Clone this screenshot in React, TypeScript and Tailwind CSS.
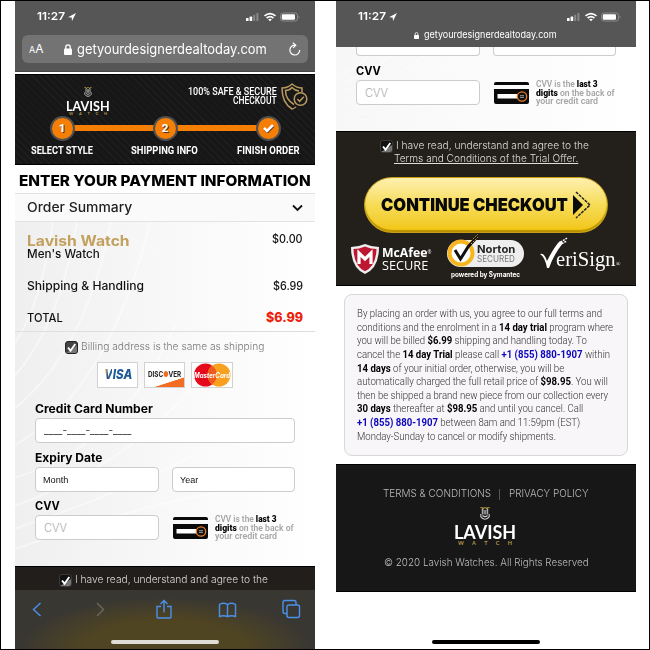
import { useLayoutEffect, useRef, type ReactNode } from "react";

const INTER = "font-['Inter','Liberation_Sans',sans-serif]";
const ROBOTO = "font-['Roboto','Liberation_Sans',sans-serif]";

/* Stretches one line of text to the width of its box. */
function Fit({ className = "", children }: { className?: string; children: ReactNode }) {
  const box = useRef<HTMLDivElement>(null);
  const text = useRef<HTMLSpanElement>(null);
  useLayoutEffect(() => {
    if (box.current && text.current) {
      const natural = text.current.offsetWidth;
      text.current.style.transform = `scaleX(${box.current.clientWidth / natural})`;
    }
  }, []);
  return (
    <div ref={box} className={`shrink-0 whitespace-nowrap ${className}`}>
      <span ref={text} className="inline-block origin-left">
        {children}
      </span>
    </div>
  );
}

function Status() {
  return (
    <div className="flex h-[30px] items-center pl-[22px] pr-[15px] pt-[1px] text-white">
      <Fit className={`w-[28px] text-[11px] font-semibold leading-none ${INTER}`}>11:27</Fit>
      <svg className="ml-[3px] h-[8px] w-[8px]" viewBox="0 0 8 8" fill="white">
        <path d="M8 0 0 4.2l3.7.2L4 8z" />
      </svg>
      <svg className="ml-auto h-[10px] w-[55px]" viewBox="0 0 55 10">
        <rect x="1" y="6" width="2.6" height="3" rx=".6" fill="white" />
        <rect x="4.6" y="4.6" width="2.6" height="4.4" rx=".6" fill="white" />
        <rect x="8.2" y="2.8" width="2" height="6.2" rx=".6" fill="#888" />
        <rect x="11.4" y="1" width="2" height="8" rx=".6" fill="#888" />
        <g fill="none" stroke="white" strokeWidth="1.7">
          <path d="M19.5 3.9q5.5-4.6 11 0M21.6 6q3.4-2.8 6.8 0" />
        </g>
        <path d="M23.2 7.4q1.8-1.2 3.6 0L25 9.3z" fill="white" />
        <rect x="35.5" y="1" width="17" height="8" rx="2.4" fill="none" stroke="#999" strokeWidth=".8" />
        <rect x="36.8" y="2.2" width="13.2" height="5.6" rx="1.2" fill="white" />
        <path d="M53.7 3.6q1.5 1.4 0 2.8z" fill="#999" />
      </svg>
    </div>
  );
}

function Lock({ className }: { className: string }) {
  return (
    <svg className={className} viewBox="0 0 8 11" fill="white">
      <rect y="4.6" width="8" height="6.4" rx="1" />
      <path d="M1.8 5V3a2.2 2.2 0 0 1 4.4 0v2" fill="none" stroke="white" strokeWidth="1.3" />
    </svg>
  );
}

function Crown({ className }: { className: string }) {
  return (
    <svg className={className} viewBox="0 0 10 13" fill="none">
      <path d="M.3.8h2.2L3 2.200 4 .8h2l1 1.400.5-1.400h2.200" stroke="#b5994c" strokeWidth="1.1" />
      <path d="M2.300 2v5.500M4.100 3v4.500M5.900 3v4.500M7.700 2v5.500" stroke="#ccc" strokeWidth="1" />
      <path d="M.8 7v2.600Q2.400 12.200 5 12.200t4.200-2.600V7M2.500 8.500q2.500 2.400 5 0" stroke="#ccc" strokeWidth="1.1" />
    </svg>
  );
}

function Logo({ big = false }: { big?: boolean }) {
  return (
    <div className="flex flex-col items-center">
      <Crown className={big ? "h-[13px] w-[10px]" : "h-[10px] w-[8px]"} />
      <Fit
        className={`font-['Lato',sans-serif] font-bold text-white ${
          big ? "mt-[4px] h-[16px] w-[62px] text-[18.5px] leading-[16px]" : "mt-[3px] h-[12px] w-[44px] text-[14px] leading-[12px]"
        }`}
      >
        LAVISH
      </Fit>
      <div
        className={`flex justify-between font-['Lato',sans-serif] font-bold text-[#b5994c] ${
          big ? "w-[54px] text-[5.5px] leading-[6px]" : "w-[38px] text-[4px] leading-[4px]"
        }`}
      >
        <span>W</span>
        <span>A</span>
        <span>T</span>
        <span>C</span>
        <span>H</span>
      </div>
    </div>
  );
}

function Swirls() {
  return (
    <svg className="absolute inset-0 -z-10 h-full w-full" viewBox="0 0 300 370" preserveAspectRatio="none" fill="none">
      <g stroke="white" strokeWidth="2" opacity=".45">
        <path d="M0 130Q26 90 38 0M0 165Q45 110 62 0M0 200Q70 140 96 0M0 240Q95 180 135 0" />
        <path d="M0 275Q110 240 160 110M0 305Q120 260 190 160M0 330Q110 290 180 250M0 352Q130 300 240 285" />
      </g>
    </svg>
  );
}

function Check({ dark = false }: { dark?: boolean }) {
  return (
    <svg className="h-[13px] w-[13px] shrink-0" viewBox="0 0 13 13">
      <rect x=".5" y=".5" width="12" height="12" rx="2.5" fill={dark ? "#111" : "#444"} stroke={dark ? "#3c3a38" : "#222"} />
      <path d="M1 12 12 5v5q0 2-2 2z" fill="#777" />
      <path d="m3 6.5 2.5 3.2L10.3 3" fill="none" stroke="white" strokeWidth="1.9" />
    </svg>
  );
}

function CvvRow() {
  return (
    <div className="flex h-[25px]">
      <div className="flex h-[25px] w-[124px] items-center rounded-[4px] border border-[#ccc] bg-white pl-[8px] pt-[2px]">
        <Fit className={`w-[23px] text-[11px] font-light leading-none text-[#aaa] ${INTER}`}>CVV</Fit>
      </div>
      <svg className="ml-[14px] mt-[1px] h-[24px] w-[35px]" viewBox="0 0 35 24">
        <path d="M0 4V3q0-2 2-2h31q2 0 2 2v1zM0 8h35v13q0 2-2 2H2q-2 0-2-2z" fill="#0a0a0a" />
        <rect x="3.5" y="13" width="20" height="4.5" fill="white" />
        <circle cx="28" cy="15.5" r="4.7" fill="#111" stroke="#ef7b22" strokeWidth="1.3" />
        <path d="M26 14.7h4M26 16.4h4" stroke="#bbb" strokeWidth=".8" />
      </svg>
      <div className={`ml-[7px] text-[9px] font-semibold leading-[8.7px] text-[#a5a5a5] ${ROBOTO}`}>
        <Fit className="w-[62px]">
          CVV is the <b className="font-black text-black">last 3</b>
        </Fit>
        <Fit className="w-[79px]">
          <b className="font-black text-black">digits</b> on the back of
        </Fit>
        <Fit className="w-[62px]">your credit card</Fit>
      </div>
    </div>
  );
}

function Label({ className, children }: { className: string; children: ReactNode }) {
  return <Fit className={`text-[11.5px] font-bold text-black ${className}`}>{children}</Fit>;
}

function Header() {
  return (
    <div className={`mt-[2px] h-[91px] border-y border-black bg-[#171717] bg-[repeating-linear-gradient(45deg,transparent_0_4px,#1e1e1e_4px_5px)] text-white ${ROBOTO}`}>
      <div className="flex h-[41px] items-start pl-[51px] pr-[7px] pt-[12px]">
        <Logo />
        <div className="ml-auto flex flex-col items-end text-[10px] font-medium leading-[9px]">
          <Fit className="w-[89px]">100% SAFE &amp; SECURE</Fit>
          <Fit className="w-[44px]">CHECKOUT</Fit>
        </div>
        <svg className="-mt-[4px] ml-[4px] h-[28px] w-[27px]" viewBox="0 0 27 28" fill="none" stroke="#b99a60" strokeWidth="1.5">
          <path d="M15 24q-3 2-4 2Q1 20 1 5 7 5 11 1q5 4 10 4v4" />
          <path d="M13 21.500q-8.500-5-8.500-14 4 0 6.500-3 3 3 7 3.500" />
          <circle cx="19.5" cy="16" r="6.3" />
          <path d="m16.4 16 2.2 2.3 4.2-4.6" />
        </svg>
      </div>
      <div className="relative flex h-[25px] items-center justify-between pl-[34.5px] pr-[34.5px]">
        <div className="absolute left-[47px] right-[47px] top-[9px] h-[6px] bg-[#f57e05]" />
        {["1", "2", "✓"].map((step) => (
          <div key={step} className="relative flex h-[25px] w-[25px] items-center justify-center rounded-full border-[2.5px] border-[#505050] bg-[#f57e05] text-[11.5px] font-extrabold text-white [text-shadow:1px_1px_0px_#532]">
            {step === "✓" ? (
              <svg className="h-[9px] w-[11px]" viewBox="0 0 11 9" fill="none" strokeWidth="2.6">
                <path d="m1.5 5 3 3 6-6" stroke="#532" />
                <path d="m1 4 3 3 6-6" stroke="white" />
              </svg>
            ) : (
              step
            )}
          </div>
        ))}
      </div>
      <div className="flex h-[19px] items-center pl-[16px] text-[11px] font-bold leading-none">
        <Fit className="w-[62px]">SELECT STYLE</Fit>
        <Fit className="ml-[38px] w-[67px]">SHIPPING INFO</Fit>
        <Fit className="ml-[39px] w-[63px]">FINISH ORDER</Fit>
      </div>
    </div>
  );
}

function Cards() {
  return (
    <div className={`flex justify-center gap-[6px] ${INTER}`}>
      <div className="flex h-[26px] w-[41px] items-center justify-center border border-[#d2d2d2] bg-white">
        <Fit className="w-[28px] text-[13.5px] font-extrabold italic leading-none text-[#1c5a98]">
          <span className="bg-gradient-to-r from-[#efa92c] from-25% to-[#1c5a98] to-35% bg-clip-text text-transparent">V</span>ISA
        </Fit>
      </div>
      <div className="flex h-[26px] w-[41px] flex-col items-center border border-[#d2d2d2] bg-white bg-[linear-gradient(162deg,transparent_73%,#f26c21_75%)] pt-[7px]">
        <Fit className="w-[33px] text-[8px] font-bold leading-none text-[#222]">
          DISC<span className="text-[#f26c21]">●</span>VER
        </Fit>
      </div>
      <div className="relative flex h-[26px] w-[42px] items-center justify-center border border-[#d2d2d2] bg-white">
        <svg className="absolute inset-0 h-[24px] w-[40px]" viewBox="0 0 40 24">
          <circle cx="13.5" cy="12" r="11.5" fill="#e5091c" />
          <circle cx="27" cy="12" r="11.5" fill="#f9a020" />
          <path d="M20.2 2.7a11.5 11.5 0 0 1 0 18.6 11.5 11.5 0 0 1 0-18.6" fill="#ef5a1d" />
        </svg>
        <Fit className="relative w-[36px] text-[7px] font-bold italic leading-none text-white">MasterCard</Fit>
      </div>
    </div>
  );
}

function LeftPhone() {
  return (
    <div className={`flex h-[648px] w-[300px] flex-col ${INTER}`}>
      <div className="h-[71px] border-b border-[#444] bg-[#565656]">
        <Status />
        <div className="mx-[7px] mt-[4px] flex h-[28px] items-center rounded-[6px] bg-[#737373] text-white">
          <div className="ml-[7px] flex items-baseline leading-none">
            <span className="text-[9px]">A</span>
            <span className="text-[12px]">A</span>
          </div>
          <Lock className="ml-[20px] h-[11px] w-[8px]" />
          <Fit className="ml-[5px] w-[190px] text-[14px] leading-none">getyourdesignerdealtoday.com</Fit>
          <svg className="ml-auto mr-[7px] h-[14px] w-[13px]" viewBox="0 0 13 14" fill="none" stroke="white" strokeWidth="1.2">
            <path d="M7 3.2a4.9 4.9 0 1 0 4.7 4.9M4.8.6l3 2.7-2.6 2.6" />
          </svg>
        </div>
      </div>
      <Header />
      <div className="flex h-[28px] items-center bg-white pl-[4px] pt-[3px]">
        <Fit className="w-[292px] text-[15px] font-extrabold leading-none text-black">ENTER YOUR PAYMENT INFORMATION</Fit>
      </div>
      <div className="flex h-[29px] items-center justify-between border-y border-[#e3e3e3] bg-[#fafafa] pl-[12px] pr-[12px]">
        <Fit className="w-[105px] text-[13px] font-medium leading-none text-[#222]">Order Summary</Fit>
        <svg className="h-[8px] w-[11px]" viewBox="0 0 11 8" fill="none" stroke="#111" strokeWidth="1.8">
          <path d="m1 1.5 4.5 4.5L10 1.5" />
        </svg>
      </div>
      <div className="relative isolate h-[344px] bg-gradient-to-r from-[#efefef] via-[#f8f8f8] to-white">
        <Swirls />
        <div className="flex h-[110px] flex-col border-b border-[#dedede] pl-[12px] pr-[12px] pt-[9px] text-[11.5px] font-[450] leading-none text-[#111]">
          <div className="flex h-[17px] justify-between">
            <Fit className="w-[103px] text-[14px] font-bold leading-[20px] text-[#c2a05d]">Lavish Watch</Fit>
            <Fit className="w-[31px] leading-[16px]">$0.00</Fit>
          </div>
          <Fit className="h-[12px] w-[73px] leading-[12px]">Men's Watch</Fit>
          <div className="mt-[18px] flex h-[16px] justify-between leading-[16px]">
            <Fit className="w-[117px]">Shipping &amp; Handling</Fit>
            <Fit className="w-[30px]">$6.99</Fit>
          </div>
          <div className="mt-[16px] flex h-[16px] justify-between leading-[16px]">
            <Fit className="w-[36px]">TOTAL</Fit>
            <Fit className="w-[37px] text-[12.5px] font-extrabold text-[#ed220b]">$6.99</Fit>
          </div>
        </div>
        <div className="flex h-[30px] items-center pl-[50px]">
          <Check />
          <Fit className="ml-[3px] w-[183px] text-[10.5px] font-light leading-none text-[#777]">Billing address is the same as shipping</Fit>
        </div>
        <Cards />
        <div className="pl-[20px] pr-[20px]">
          <Label className="mt-[12px] h-[18px] w-[118px] leading-[18px]">Credit Card Number</Label>
          <div className="flex h-[25px] items-center rounded-[4px] border border-[#ccc] bg-white pl-[8px]">
            <Fit className="w-[87px] text-[11px] leading-none text-[#444]">____-____-____-____</Fit>
          </div>
          <Label className="mt-[6px] h-[18px] w-[67px] leading-[18px]">Expiry Date</Label>
          <div className="flex gap-[13px] text-[9.5px] text-[#111]">
            <div className="flex h-[25px] w-[124px] items-center rounded-[4px] border border-[#ccc] bg-white pl-[7px]">
              <Fit className="w-[25px] font-['Liberation_Sans',sans-serif] leading-none">Month</Fit>
            </div>
            <div className="flex h-[25px] w-[123px] items-center rounded-[4px] border border-[#ccc] bg-white pl-[7px]">
              <Fit className="w-[18px] font-['Liberation_Sans',sans-serif] leading-none">Year</Fit>
            </div>
          </div>
          <Label className="mt-[5px] h-[18px] w-[25px] leading-[18px]">CVV</Label>
          <CvvRow />
        </div>
      </div>
      <div className="flex h-[24px] items-center border-t border-black bg-[#211e1b] pl-[44px] pt-[4px]">
        <Check dark />
        <Fit className="ml-[3px] w-[193px] text-[10.5px] font-light leading-none text-[#ddd]">I have read, understand and agree to the</Fit>
      </div>
      <div className="flex h-[59px] flex-col items-center bg-[#393732] bg-[radial-gradient(ellipse_145px_52px_at_50%_100%,#504522_55%,#393732)]">
        <svg className="h-[50px] w-[300px]" viewBox="0 0 300 50" fill="none" stroke="#4b91ea" strokeWidth="1.4">
          <path d="m25.5 13-7 6.5 7 6.5" />
          <path d="m82 13 6.5 6.5L82 26" stroke="#6a6861" />
          <path d="M146 16.500h-4v10.500q0 1 1 1h12q1 0 1-1V16.500h-4M149 22.500V11M145.500 14l3.500-3.500 3.500 3.500" />
          <path d="M212.500 14.500v12q-4-1.500-8 0v-12q4-2.500 8 0 4-2.500 8 0v12q-4-1.500-8 0" />
          <rect x="272" y="15" width="12.500" height="12.500" rx="2" />
          <path d="M272 23.500h-2q-2 0-2-2v-9q0-2 2-2h9q2 0 2 2V15" />
        </svg>
        <div className="h-[4px] w-[108px] rounded-full bg-[#e0ddd6]" />
      </div>
    </div>
  );
}

function Badges() {
  return (
    <div className="flex h-[48px] items-start pl-[15px] text-white">
      <svg className="mt-[8px] h-[30px] w-[28px]" viewBox="0 0 28 30">
        <path d="M14 0q7 3 14 3 0 21-14 27Q0 24 0 3q7 0 14-3" fill="#eee" />
        <path d="M14 2.500q6 2.500 11.500 2.500-.5 17-11.500 22.300Q3 22 2.500 5 8 5 14 2.500" fill="#bd1732" />
        <path d="M8 20V9l6 6 6-6v11" fill="none" stroke="white" strokeWidth="3.200" />
      </svg>
      <div className="ml-[3px] mt-[10px] font-['Open_Sans',sans-serif] text-[13px] leading-[13px]">
        <Fit className="h-[13px] w-[49px] font-bold">
          McAfee<span className="align-top text-[5px] font-normal">®</span>
        </Fit>
        <Fit className="h-[13px] w-[46px] font-medium">SECURE</Fit>
      </div>
      <div className="ml-[16px] w-[77px]">
        <div className="relative mt-[4px] flex h-[27px] rounded-full bg-[#eee] pl-[30px] pt-[4px]">
          <div className={`leading-[10px] ${INTER}`}>
            <Fit className="h-[10px] w-[38px] text-[11px] font-bold text-[#222]">Norton</Fit>
            <Fit className="h-[10px] w-[38px] text-[8.5px] text-[#777]">SECURED</Fit>
          </div>
          <svg className="absolute -top-[6px] left-0 h-[34px] w-[34px]" viewBox="0 0 34 34" fill="none">
            <circle cx="14" cy="19" r="11.500" stroke="#f7b51e" strokeWidth="4" fill="white" />
            <path d="m8 16 5.500 9L21 13l9-10" stroke="#111" strokeWidth="3" />
            <path d="m22 9 9-9M24 10l7-7" stroke="#f7b51e" strokeDasharray="1.500 1.500" />
          </svg>
        </div>
        <Fit className={`ml-[4px] mt-[3px] w-[69px] text-[7px] font-bold leading-[9px] ${INTER}`}>powered by Symantec</Fit>
      </div>
      <svg className="ml-[16px] mt-[1px] h-[32px] w-[28px] shrink-0" viewBox="0 0 28 32">
        <path d="M0 17q4-2 7 7Q14 10 20 4l3 2Q14 17 9 31H7Q5 20 0 17" fill="white" />
        <path d="m18 7 9-6M19 8l8-4" stroke="white" strokeWidth="1.500" strokeDasharray="2 1" />
      </svg>
      <Fit className="-ml-[12px] mt-[11px] w-[64px] font-['Liberation_Serif',serif] text-[20px] leading-[24px]">
        eriSign<span className="text-[6px]">®</span>
      </Fit>
    </div>
  );
}

function Terms() {
  return (
    <div className={`mx-[8px] mt-[8px] h-[162px] rounded-[8px] border border-[#d8d8da] bg-[#f8f6f8] pl-[12px] pt-[12px] text-[11px] font-[350] leading-[13.63px] text-[#333] [&_b]:font-bold [&_b]:text-black [&_i]:font-bold [&_i]:not-italic [&_i]:text-[#0b05bd] ${ROBOTO}`}>
      <Fit className="w-[245px]">By placing an order with us, you agree to our full terms and</Fit>
      <Fit className="w-[256px]">conditions and the enrolment in a <b>14 day trial</b> program where</Fit>
      <Fit className="w-[230px]">you will be billed <b>$6.99</b> shipping and handling today. To</Fit>
      <Fit className="w-[253px]">cancel the <b>14 day Trial</b> please call <i>+1 (855) 880-1907</i> within</Fit>
      <Fit className="w-[207px]"><b>14 days</b> of your initial order, otherwise, you will be</Fit>
      <Fit className="w-[251px]">automatically charged the full retail price of <b>$98.95</b>. You will</Fit>
      <Fit className="w-[251px]">then be shipped a brand new piece from our collection every</Fit>
      <Fit className="w-[226px]"><b>30 days</b> thereafter at <b>$98.95</b> and until you cancel. Call</Fit>
      <Fit className="w-[223px]"><i>+1 (855) 880-1907</i> between 8am and 11:59pm (EST)</Fit>
      <Fit className="w-[199px]">Monday-Sunday to cancel or modify shipments.</Fit>
    </div>
  );
}

function RightPhone() {
  return (
    <div className={`flex h-[648px] w-[300px] flex-col ${INTER}`}>
      <div className="h-[46px] bg-[#565656]">
        <Status />
        <div className="flex items-center pl-[78px] text-white">
          <Lock className="h-[7px] w-[5px]" />
          <Fit className="ml-[5px] w-[133px] text-[9.5px] leading-[8px]">getyourdesignerdealtoday.com</Fit>
        </div>
      </div>
      <div className="relative isolate h-[84px] overflow-hidden bg-gradient-to-r from-[#f7f7f7] to-white pl-[20px] pr-[20px]">
        <Swirls />
        <div className="flex gap-[13px]">
          <div className="h-[9px] w-[124px] rounded-b-[4px] border border-t-0 border-[#ccc] bg-white" />
          <div className="h-[9px] w-[123px] rounded-b-[4px] border border-t-0 border-[#ccc] bg-white" />
        </div>
        <Label className="mt-[6px] h-[18px] w-[25px] leading-[18px]">CVV</Label>
        <CvvRow />
      </div>
      <div className="h-[155px] border-y border-black bg-[#23201c]">
        <div className="flex h-[20px] items-center pl-[44px] pt-[8px]">
          <Check dark />
          <Fit className="ml-[3px] w-[193px] text-[10.5px] font-light leading-none text-[#ddd]">I have read, understand and agree to the</Fit>
        </div>
        <Fit className="ml-[58px] mt-[1px] h-[13px] w-[184px] text-[10.5px] font-light leading-[12px] text-[#ddd]">
          <u>Terms and Conditions of the Trial Offer.</u>
        </Fit>
        <div className="ml-[28px] mt-[11px] flex h-[56px] w-[244px] items-center rounded-full border border-[#c79f16] bg-gradient-to-b from-[#fff0ae] via-[#f6dc54] to-[#f2c500] pl-[16px] shadow-[inset_0_-2px_1px_#b99100]">
          <Fit className="w-[187px] text-[18px] font-black leading-none text-[#090909]">CONTINUE CHECKOUT</Fit>
          <svg className="ml-[4px] h-[28px] w-[20px]" viewBox="0 0 20 28">
            <path d="m1 4 10 10L1 24z" fill="#090909" />
            <path d="m4 1 14 13L4 27" fill="none" stroke="#222" strokeWidth="1.500" strokeDasharray="3 1" />
          </svg>
        </div>
        <div className="h-[3px]" />
        <Badges />
      </div>
      <Terms />
      <div className="mt-[8px] flex h-[128px] flex-col items-center border-y border-black bg-[#171717] pt-[23px] text-[#bbb]">
        <div className="flex h-[12px] items-center text-[10.5px] font-light leading-none">
          <Fit className="w-[108px]">TERMS &amp; CONDITIONS</Fit>
          <div className="ml-[8px] mr-[9px] h-[11px] w-px bg-[#555]" />
          <Fit className="w-[80px]">PRIVACY POLICY</Fit>
        </div>
        <div className="mt-[7px] h-[41px] pr-[2px]">
          <Logo big />
        </div>
        <Fit className="mt-[8px] w-[205px] text-[10.5px] font-light leading-[14px]">© 2020 Lavish Watches. All Rights Reserved</Fit>
      </div>
      <div className="ml-[96px] mt-[48px] h-[4px] w-[108px] rounded-full bg-black" />
    </div>
  );
}

export default function App() {
  return (
    <div className="flex h-[650px] w-[650px] gap-[21px] overflow-hidden border border-black bg-white pl-[14px]">
      <LeftPhone />
      <RightPhone />
    </div>
  );
}
